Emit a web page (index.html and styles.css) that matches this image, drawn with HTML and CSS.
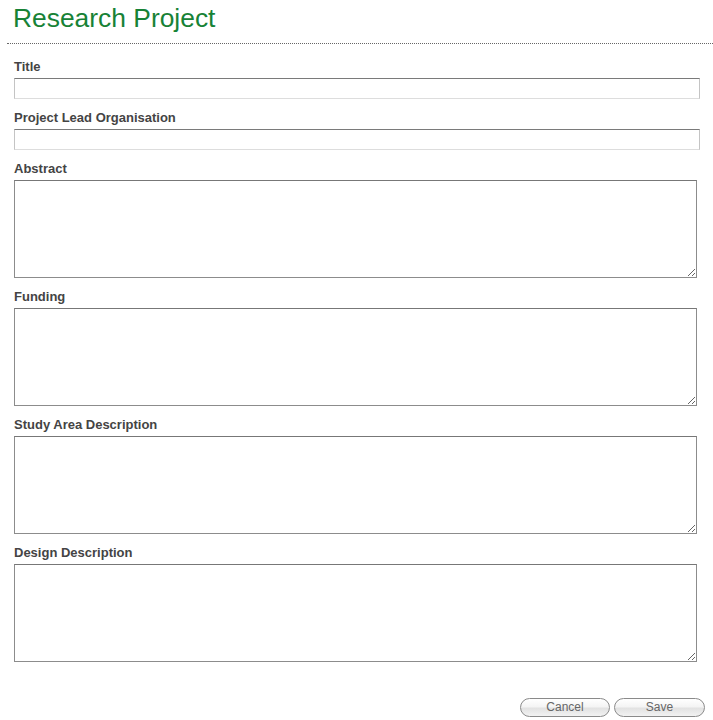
FILE: index.html
```html
<!DOCTYPE html>
<html>
<head>
<meta charset="utf-8">
<title>Research Project</title>
<link rel="stylesheet" href="styles.css">
</head>
<body>
<div class="page">
  <h1 class="heading">Research Project</h1>
  <div class="rule"></div>
  <form class="form">
    <div class="field">
      <label class="label">Title</label>
      <input class="text" type="text">
    </div>
    <div class="field">
      <label class="label">Project Lead Organisation</label>
      <input class="text" type="text">
    </div>
    <div class="field">
      <label class="label">Abstract</label>
      <textarea class="area"></textarea>
    </div>
    <div class="field">
      <label class="label">Funding</label>
      <textarea class="area"></textarea>
    </div>
    <div class="field">
      <label class="label">Study Area Description</label>
      <textarea class="area"></textarea>
    </div>
    <div class="field">
      <label class="label">Design Description</label>
      <textarea class="area"></textarea>
    </div>
    <div class="actions">
      <button type="button" class="btn btn-cancel">Cancel</button>
      <button type="button" class="btn btn-save">Save</button>
    </div>
  </form>
</div>
</body>
</html>
```
FILE: styles.css
```css
html, body {
  margin: 0;
  padding: 0;
  background: #ffffff;
}

.page {
  padding-left: 7px;
  font-family: "Liberation Sans", Arial, sans-serif;
}

.heading {
  margin: 3px 0 10px 0;
  padding-left: 6px;
  font-size: 26.4px;
  line-height: 30px;
  font-weight: normal;
  color: #178236;
}

.rule {
  height: 0;
  border-top: 1px dotted #666666;
}

.form {
  padding: 16px 0 0 7px;
  margin: 0;
}

.field {
  display: flex;
  flex-direction: column;
  align-items: flex-start;
  margin-bottom: 12px;
}

.label {
  display: block;
  font-size: 13px;
  line-height: 14px;
  font-weight: bold;
  color: #444444;
  margin-bottom: 4px;
}

.text {
  box-sizing: border-box;
  width: 686px;
  height: 21px;
  margin: 0;
  padding: 2px 3px;
  border-style: solid;
  border-width: 1px;
  border-color: #7a7a7a #c4c4c4 #dddddd #c4c4c4;
  background: #ffffff;
  outline: none;
}

.area {
  box-sizing: border-box;
  width: 683px;
  height: 98px;
  margin: 0;
  padding: 2px;
  border-style: solid;
  border-width: 1px;
  border-color: #777777 #8c8c8c #8c8c8c #8c8c8c;
  background: #ffffff;
  resize: both;
  outline: none;
}

.actions {
  display: flex;
  justify-content: flex-end;
  gap: 4px;
  margin-top: 36px;
  padding-right: 8px;
}

.btn {
  box-sizing: border-box;
  height: 19px;
  margin: 0;
  padding: 0;
  border: 1px solid #8a8a8a;
  border-radius: 10px;
  background: linear-gradient(#ffffff 0%, #f4f4f4 45%, #e2e2e2 55%, #f2f2f2 100%);
  font-family: "Liberation Sans", Arial, sans-serif;
  font-size: 12px;
  line-height: 17px;
  color: #666666;
  text-align: center;
}

.btn-cancel {
  width: 90px;
}

.btn-save {
  width: 91px;
}
```
